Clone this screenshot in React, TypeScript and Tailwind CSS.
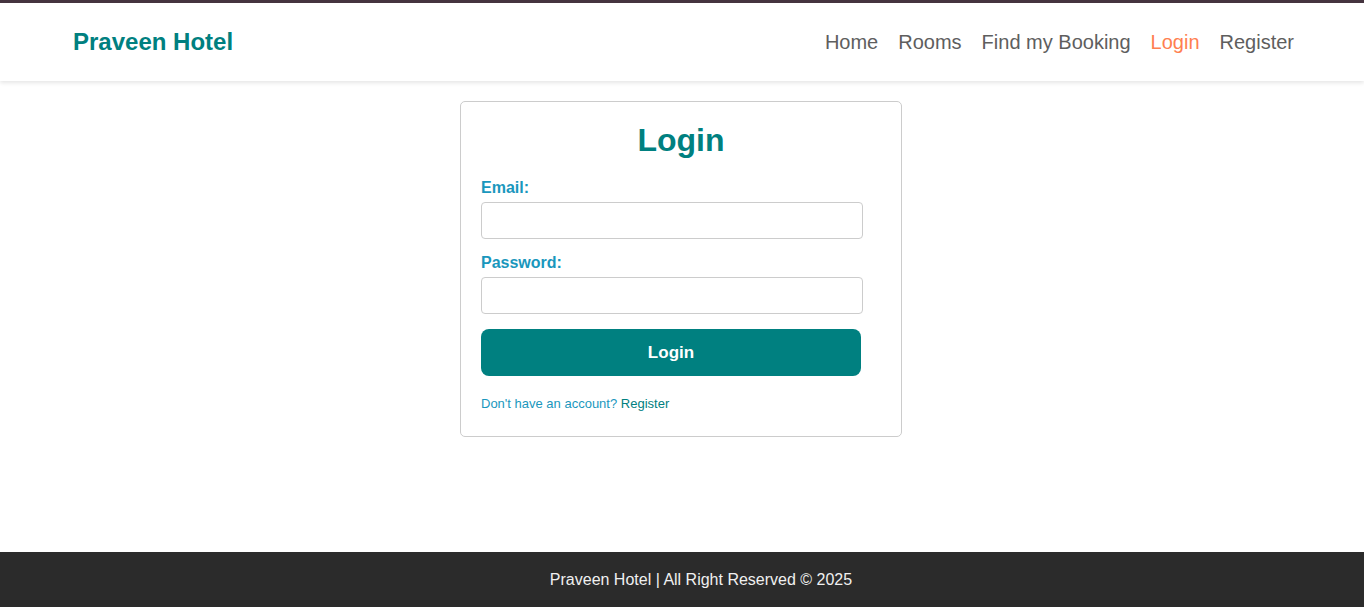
export default function App() {
    const links = ["Home", "Rooms", "Find my Booking", "Login", "Register"];

    return (
        <div className="min-h-screen flex flex-col bg-white font-['Liberation_Sans',Arial,sans-serif]">
            <header className="border-t-[3px] border-[#45343f] bg-white shadow-[0_2px_4px_rgba(0,0,0,0.1)]">
                <nav className="h-[78px] flex items-center justify-between pl-[73px] pr-[70px]">
                    <div className="text-[24px] font-bold text-[#008080]">Praveen Hotel</div>
                    <ul className="flex items-center gap-[20px] text-[20px]">
                        {links.map((l) => (
                            <li key={l} className={l === "Login" ? "text-[#ff7f50]" : "text-[#5e5e5e]"}>
                                {l}
                            </li>
                        ))}
                    </ul>
                </nav>
            </header>

            <main className="flex-1 flex justify-center pt-[20px] pr-[2px]">
                <div className="w-[442px] h-[336px] border border-[#cccccc] rounded-[5px] p-[20px]">
                    <h2 className="text-[32px] font-bold text-[#008080] text-center leading-[37px] mb-[20px]">
                        Login
                    </h2>
                    <form>
                        <label className="block text-[16px] leading-[18px] font-bold text-[#1a97bd] mb-[5px]">
                            Email:
                        </label>
                        <input
                            type="email"
                            className="block w-[382px] h-[37px] border border-[#cccccc] rounded-[4px] mb-[15px]"
                        />
                        <label className="block text-[16px] leading-[18px] font-bold text-[#1a97bd] mb-[5px]">
                            Password:
                        </label>
                        <input
                            type="password"
                            className="block w-[382px] h-[37px] border border-[#cccccc] rounded-[4px] mb-[15px]"
                        />
                        <button
                            type="button"
                            className="block w-[380px] h-[47px] rounded-[8px] bg-[#008080] text-white text-[17px] font-bold"
                        >
                            Login
                        </button>
                        <p className="mt-[20px] text-[13px] leading-[15px] text-[#1a97bd]">
                            Don't have an account? <span className="text-[#008080]">Register</span>
                        </p>
                    </form>
                </div>
            </main>

            <footer className="h-[55px] bg-[#2b2b2b] flex items-center justify-center pl-[38px] text-[16px] text-[#f0f0f0]">
                Praveen Hotel | All Right Reserved © 2025
            </footer>
        </div>
    );
}
